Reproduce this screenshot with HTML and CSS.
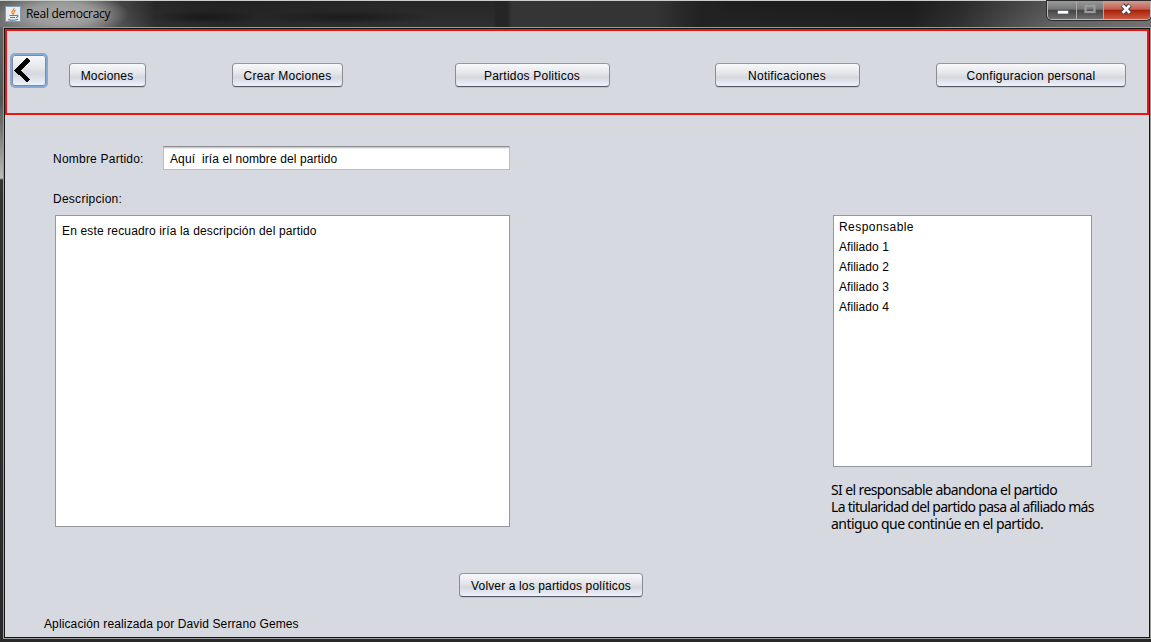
FILE: index.html
```
<!DOCTYPE html>
<html lang="es">
<head>
<meta charset="utf-8">
<title>Real democracy</title>
<link rel="stylesheet" href="styles.css">
</head>
<body>
<div class="window">
  <header class="titlebar">
    <svg class="app-icon" viewBox="0 0 16 16">
      <rect x=".5" y=".5" width="15" height="15" fill="#e9edf1" stroke="#819bb4"/>
      <path d="M9 2C9.500 4 6 5 7 7l1 1.500M10.500 4C8 5.500 9.500 6.500 8.500 8.500" fill="none" stroke="#e58424" stroke-width="1.200"/>
      <path d="M4.500 9.500h6.500M5 11.500h5M3 13.500c3 1 7 1 10-.3M11 9.500c3-1 2 1.800 0 2" fill="none" stroke="#53809f" stroke-width="1.100"/>
    </svg>
    <span class="title">Real democracy</span>
    <div class="controls">
      <span class="control minimize"><svg width="28" height="18"><rect x="9.500" y="9.500" width="11" height="3.500" fill="#fff" stroke="#555b66" stroke-width=".7"/></svg></span>
      <span class="control maximize"><svg width="26" height="18"><rect x="8.500" y="5" width="9" height="6" fill="none" stroke="#9b9b9b" stroke-width="2.200"/></svg></span>
      <span class="control close"><svg width="46" height="18"><path d="M18.500 4l7.500 8M26 4l-7.500 8" stroke="#4a4652" stroke-width="4.800"/><path d="M18.700 4.300l7 7.500M25.700 4.300l-7 7.500" stroke="#fff" stroke-width="2.700"/></svg></span>
    </div>
  </header>
  <main class="content">
    <nav class="nav">
      <button class="back" aria-label="Volver"><svg width="38" height="34" shape-rendering="crispEdges"><path d="M18.500 5.500L7.500 16.500l11 10.500" fill="none" stroke="#000" stroke-width="4.400"/></svg></button>
      <button class="button mociones">Mociones</button>
      <button class="button crear">Crear Mociones</button>
      <button class="button partidos">Partidos Politicos</button>
      <button class="button notificaciones">Notificaciones</button>
      <button class="button configuracion">Configuracion personal</button>
    </nav>
    <div class="columns">
      <section class="party">
        <div class="name-row"><span class="name-label">Nombre Partido:</span><div class="name-field">Aquí&nbsp; iría el nombre del partido</div></div>
        <div class="description-label">Descripcion:</div>
        <div class="description">En este recuadro iría la descripción del partido</div>
      </section>
      <aside class="members">
        <ul class="list"><li class="leader">Responsable</li><li>Afiliado 1</li><li>Afiliado 2</li><li>Afiliado 3</li><li>Afiliado 4</li></ul>
        <p class="note"><span class="n1">SI el responsable abandona el partido</span><br><span class="n2">La titularidad del partido pasa al afiliado más</span><br><span class="n3">antiguo que continúe en el partido.</span></p>
      </aside>
    </div>
    <button class="button return">Volver a los partidos políticos</button>
    <footer class="credit">Aplicación realizada por David Serrano Gemes</footer>
  </main>
</div>
</body>
</html>
```
FILE: styles.css
```
* { box-sizing: border-box; }
body { margin: 0; overflow: hidden; font: 12px/16px "Liberation Sans", Arial, sans-serif; letter-spacing: .22px; color: #000; }
.window {
  width: 1151px; height: 642px; padding: 0 0 3px 3px;
  background:
    linear-gradient(#777 0, #626262 30px, #555 100px, #777 130px, #bbb 178px, #333 180px, #29292b 100%) 0 0 / 3px 100% no-repeat,
    #292929;
}
.titlebar {
  height: 27px; margin-left: -3px; padding-left: 5px; display: flex; position: relative;
  border-top: 1px solid #c9cec9;
  background:
    radial-gradient(ellipse 66px 22px at 62px 13px, #a6a6a6 0, rgba(160,160,160,.9) 50%, rgba(130,130,130,0) 100%),
    linear-gradient(90deg, transparent 494px, #252525 496px, #252525 507px, #353535 512px, #343434 655px, #222 700px, transparent 730px),
    radial-gradient(ellipse 55px 7px at 205px 16px, #191919, transparent),
    radial-gradient(ellipse 90px 7px at 345px 16px, #1b1b1b, transparent),
    linear-gradient(rgba(0,0,0,.2), rgba(0,0,0,0) 30px),
    linear-gradient(90deg, #777 0, #777 80px, #555 120px, #303030 155px, #292929 220px, #303030 400px, #303030 490px, #252525 730px, #222 910px, #333 960px, #666 1050px, #777 1151px);
}
.app-icon { width: 16px; height: 16px; margin-top: 5px; }
.title { margin: 5px 0 0 5px; font: 12px/16px "Open Sans", "Noto Sans", sans-serif; letter-spacing: -.3px; }
.controls { display: flex; width: 104px; height: 19px; margin-left: auto; border: 1px solid #bbb; border-top: 0; border-radius: 0 0 5px 5px; box-shadow: 0 0 0 1px #292929; overflow: hidden; }
.control { height: 18px; border-right: 1px solid #aaa; background: linear-gradient(#999, #777 46%, #444 50%, #6d6d6d); }
.control svg { display: block; }
.minimize { width: 29px; }
.maximize { width: 27px; }
.close { width: 46px; border: 0; background: linear-gradient(#cf9c92, #c75f50 46%, #a81f09 50%, #cc5940); }
.content { width: 1148px; height: 612px; border: 1px solid #9b9b9b; box-shadow: inset 0 0 0 1px #151515; padding: 1px; background: #d6d9e0; display: flex; flex-direction: column; }
.nav { flex: none; width: 1144px; height: 86px; border: 2px solid #eb1611; display: flex; align-items: flex-start; padding-top: 32px; }
.button { flex: none; height: 24px; padding: 1px 0 0; border: 1px solid #898c93; border-top-color: #95989f; border-bottom-color: #555961; border-radius: 4px; background: linear-gradient(#f8f9fb, #e4e6ea 42%, #d5d8de 60%, #edf2fc); box-shadow: 0 1px #bfc3ca; font: inherit; letter-spacing: inherit; color: inherit; text-align: center; white-space: nowrap; }
.back { width: 38px; height: 35px; margin: -10px 0 0 3px; padding: 0; border: 2px solid #85aad4; border-radius: 5px; background: linear-gradient(#f8f9fb, #e4e6ea 42%, #d5d8de 60%, #edf2fc); box-shadow: inset 0 0 0 1px #7f8a9a; }
.back svg { display: block; margin: -1px 0 0 -2px; }
.mociones { width: 77px; margin-left: 21px; padding-right: 1px; letter-spacing: .15px; }
.crear { width: 111px; margin-left: 86px; }
.partidos { width: 155px; margin-left: 112px; padding-right: 1px; }
.notificaciones { width: 145px; margin-left: 105px; padding-right: 1px; }
.configuracion { width: 190px; margin-left: 76px; letter-spacing: .25px; }
.columns { display: flex; height: 458px; padding: 31px 0 0 48px; }
.party { width: 457px; }
.name-row { display: flex; height: 24px; }
.name-label { width: 110px; padding-top: 5px; }
.name-field { width: 347px; height: 24px; padding: 4px 6px; border: 1px solid #bcbdc2; border-top-color: #8b8c91; background: #fff; box-shadow: inset 0 1px #cbccce, inset 0 2px #ececec; letter-spacing: .1px; }
.description-label { height: 45px; padding-top: 21px; letter-spacing: .26px; }
.description { width: 455px; height: 312px; margin-left: 2px; padding: 7px 6px; border: 1px solid #9297a1; background: #fff; letter-spacing: .15px; }
.members { width: 270px; margin: 69px 0 0 321px; }
.list { width: 259px; height: 252px; margin: 0 0 0 2px; padding: 1px 5px; border: 1px solid #9297a1; background: #fff; list-style: none; line-height: 20px; letter-spacing: .05px; }
.leader { letter-spacing: .45px; }
.note { margin: 14px 0 0; font: 14px/17px "Noto Sans", "Open Sans", sans-serif; white-space: nowrap; }
.n1 { letter-spacing: -.61px; }
.n2 { letter-spacing: -.7px; }
.n3 { letter-spacing: -.56px; }
.return { width: 184px; margin-left: 454px; letter-spacing: .14px; }
.credit { margin: 19px 0 0 39px; letter-spacing: .12px; }
```
